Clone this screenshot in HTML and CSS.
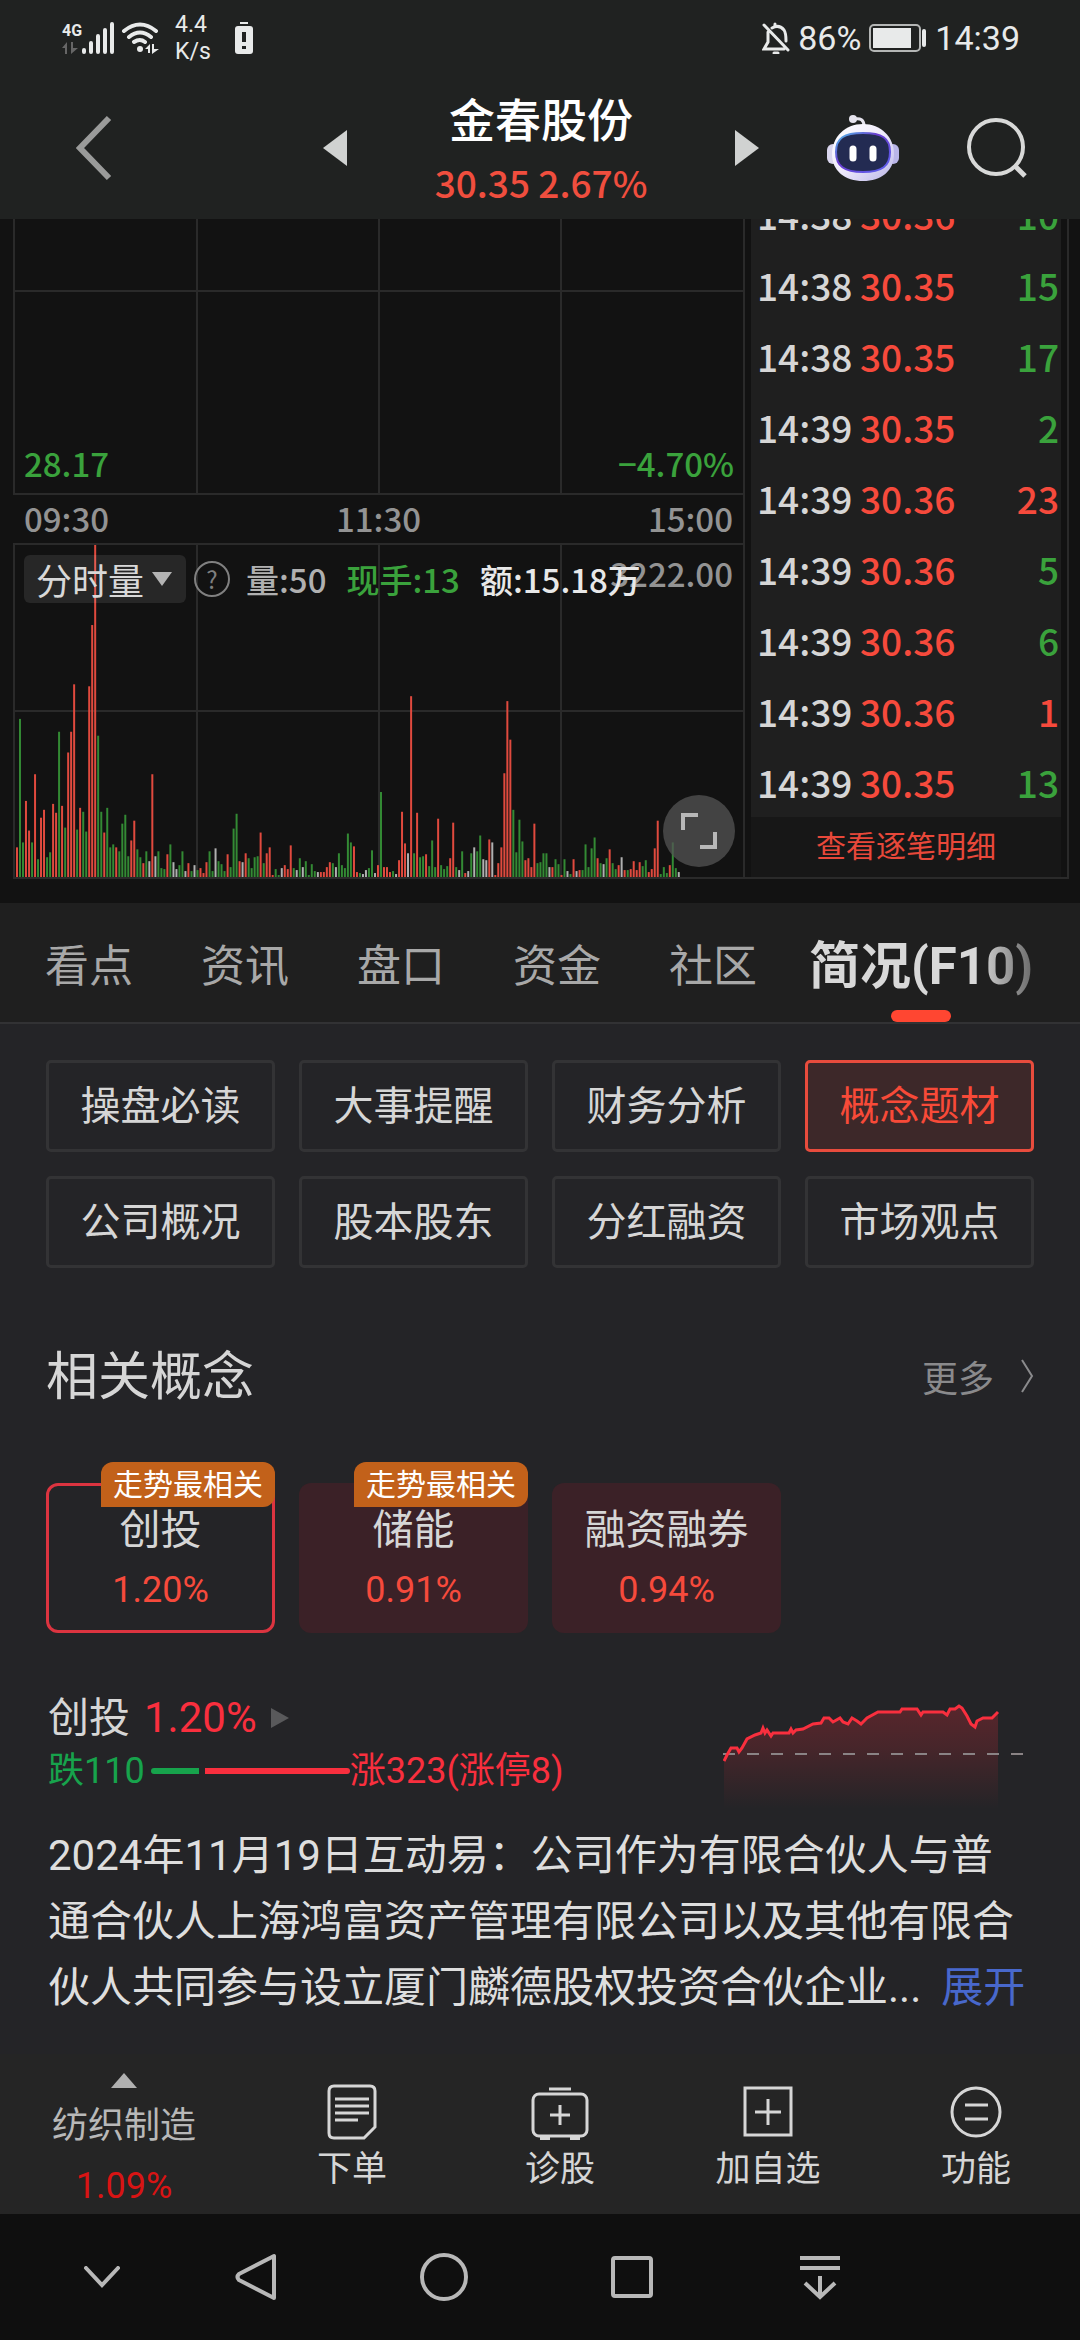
FILE: index.html
```html
<!DOCTYPE html>
<html lang="zh-CN">
<head>
  <meta charset="UTF-8">
  <meta name="viewport" content="width=device-width, initial-scale=1">
  <title>金春股份</title>
  <link rel="stylesheet" href="styles.css">
</head>
<body>
  <div class="status">
    <div class="net">
      <span class="net-type">4G</span>
      <svg width="16" height="12" viewBox="0 0 16 12" fill="#666"><path d="M0 6L5 0V12H3V6zM9 0H11V6H16L9 12z"/></svg>
    </div>
    <svg class="signal" width="33" height="32" viewBox="0 0 33 32" stroke="#e8eaea" stroke-width="4" stroke-linecap="round"><path d="M2 28V30M9 21V30M16 14V30M23 8V30M30 2V30"/></svg>
    <svg class="wifi" width="40" height="32" viewBox="0 0 40 32" fill="none" stroke="#e8eaea" stroke-width="4" stroke-linecap="round"><path d="M3 9Q19 -4 35 9M8 15Q19 6 30 15M13 20Q19 16 24 20"/><circle cx="19" cy="27" r="3" fill="#e8eaea" stroke="none"/><path d="M24 27L29 22V31H27V27zM31 22H33V27H38L31 32z" fill="#e8eaea" stroke="none"/></svg>
    <div class="speed">4.4<br>K/s</div>
    <svg class="warn" width="18" height="32" viewBox="0 0 18 32"><path d="M5 0H13V2H5z" fill="#e8eaea"/><rect y="4" width="18" height="28" rx="3" fill="#e8eaea"/><path d="M9 10V20M9 24V27" stroke="#202221" stroke-width="4"/></svg>
    <div class="status-right">
      <svg width="28" height="32" viewBox="0 0 28 32" fill="none" stroke="#e8eaea" stroke-width="3" stroke-linecap="round"><path d="M2 3L26 28M10 6Q17 2 22 8Q24 11 24 19M6 10V20L2 27H22"/><path d="M13 4V2M12 31H16"/></svg>
      <span>86%</span>
      <svg class="battery" width="58" height="28" viewBox="0 0 58 28"><rect x="1" y="1" width="50" height="26" rx="4" fill="none" stroke="#b4b6b5" stroke-width="2"/><rect x="4" y="4" width="38" height="20" fill="#e8eaea"/><path d="M55 7V21" stroke="#e8eaea" stroke-width="4" stroke-linecap="round"/></svg>
      <span>14:39</span>
    </div>
  </div>

  <header class="header">
    <button class="icon-btn" aria-label="返回"><svg width="36" height="66" viewBox="0 0 36 66" fill="none" stroke="#9a9b9a" stroke-width="6"><path d="M33 3L4 33L33 63"/></svg></button>
    <div class="switcher">
      <button class="icon-btn" aria-label="上一只"><svg width="24" height="36" viewBox="0 0 24 36"><path d="M0 18L24 0V36z" fill="#d0d2d1"/></svg></button>
      <div class="stock">
        <h1>金春股份</h1>
        <p class="num">30.35 2.67%</p>
      </div>
      <button class="icon-btn" aria-label="下一只"><svg width="24" height="36" viewBox="0 0 24 36"><path d="M24 18L0 0V36z" fill="#d0d2d1"/></svg></button>
    </div>
    <button class="icon-btn robot" aria-label="智能助手">
      <svg width="72" height="68" viewBox="0 0 72 68">
        <defs>
          <linearGradient id="shell" x1="0" y1="0" x2="1" y2="1"><stop offset="0" stop-color="#fff"/><stop offset=".5" stop-color="#eeeafb"/><stop offset="1" stop-color="#b9b5e8"/></linearGradient>
          <linearGradient id="rim" x1="0" y1="0" x2="1" y2="1"><stop offset="0" stop-color="#4fc0e8"/><stop offset=".4" stop-color="#6a3bd0"/><stop offset="1" stop-color="#5b62ee"/></linearGradient>
        </defs>
        <path d="M27 5Q37 3 37 12" fill="none" stroke="#e6e4ee" stroke-width="3"/>
        <circle cx="26" cy="5" r="4" fill="#e6e4ee"/>
        <rect x="0" y="30" width="12" height="20" rx="6" fill="#d9d6ee"/>
        <rect x="60" y="30" width="12" height="20" rx="6" fill="#b9b5e8"/>
        <path d="M36 10C54 10 67 23 67 40C67 57 54 67 36 67C18 67 5 57 5 40C5 23 18 10 36 10z" fill="url(#shell)"/>
        <path d="M36 19C55 19 63 24 63 38C63 52 55 58 36 58C17 58 9 52 9 38C9 24 17 19 36 19z" fill="#232b52" stroke="url(#rim)" stroke-width="2"/>
        <path d="M26 35V44M46 35V44" stroke="#fff" stroke-width="7" stroke-linecap="round"/>
      </svg>
    </button>
    <button class="icon-btn" aria-label="搜索"><svg width="60" height="60" viewBox="0 0 60 60" fill="none" stroke="#d8d9d8" stroke-width="4"><circle cx="29" cy="29" r="27"/><path d="M48 48L58 58" stroke-width="5"/></svg></button>
  </header>

  <section class="quote">
    <div class="chart num">
      <div class="pane price-pane">
        <svg class="grid" width="100%" height="100%" stroke="#2a2a2a" stroke-width="2">
          <line x1="25%" x2="25%" y1="0" y2="100%"/><line x1="50%" x2="50%" y1="0" y2="100%"/><line x1="75%" x2="75%" y1="0" y2="100%"/><line x1="0" x2="100%" y1="72" y2="72"/>
        </svg>
        <span class="down">28.17</span>
        <span class="down">−4.70%</span>
      </div>
      <div class="axis"><span>09:30</span><span>11:30</span><span>15:00</span></div>
      <div class="pane volume-pane">
        <svg class="grid" width="100%" height="100%" stroke="#2a2a2a" stroke-width="2">
          <line x1="25%" x2="25%" y1="0" y2="100%"/><line x1="50%" x2="50%" y1="0" y2="100%"/><line x1="75%" x2="75%" y1="0" y2="100%"/><line x1="0" x2="100%" y1="50%" y2="50%"/>
        </svg>
        <svg class="grid" id="volume" width="100%" height="100%" viewBox="0 0 730 336" preserveAspectRatio="none"></svg>
        <span class="max">3222.00</span>
        <div class="indicators">
          <label class="picker">
            <select aria-label="指标"><option>分时量</option></select>
            <svg width="20" height="14" viewBox="0 0 20 14"><path d="M0 0H20L10 14z" fill="#b4b4b4"/></svg>
          </label>
          <button class="icon-btn help" aria-label="说明">?</button>
          <span class="vol">量:50</span>
          <span class="down">现手:13</span>
          <span class="amount">额:15.18万</span>
        </div>
        <button class="expand" aria-label="全屏"><svg width="38" height="38" viewBox="0 0 38 38" fill="none" stroke="#b8b8b8" stroke-width="4"><path d="M3 18V3H18M35 20V35H20"/></svg></button>
      </div>
    </div>
    <div class="ticks">
      <div class="tick-list">
        <table class="num">
          <tbody>
            <tr><td>14:38</td><td>30.36</td><td class="down">10</td></tr>
            <tr><td>14:38</td><td>30.35</td><td class="down">15</td></tr>
            <tr><td>14:38</td><td>30.35</td><td class="down">17</td></tr>
            <tr><td>14:39</td><td>30.35</td><td class="down">2</td></tr>
            <tr><td>14:39</td><td>30.36</td><td class="up">23</td></tr>
            <tr><td>14:39</td><td>30.36</td><td class="down">5</td></tr>
            <tr><td>14:39</td><td>30.36</td><td class="down">6</td></tr>
            <tr><td>14:39</td><td>30.36</td><td class="up">1</td></tr>
            <tr><td>14:39</td><td>30.35</td><td class="down">13</td></tr>
          </tbody>
        </table>
      </div>
      <a class="tick-more" href="#">查看逐笔明细</a>
    </div>
  </section>

  <nav class="tabs">
    <a href="#">看点</a>
    <a href="#">资讯</a>
    <a href="#">盘口</a>
    <a href="#">资金</a>
    <a href="#">社区</a>
    <a href="#" class="active"><span>简况(F10)</span></a>
  </nav>

  <main class="content">
    <div class="menu">
      <button>操盘必读</button>
      <button>大事提醒</button>
      <button>财务分析</button>
      <button class="selected">概念题材</button>
      <button>公司概况</button>
      <button>股本股东</button>
      <button>分红融资</button>
      <button>市场观点</button>
    </div>

    <div class="section-head">
      <h2>相关概念</h2>
      <a href="#">更多 <svg width="14" height="34" viewBox="0 0 14 34" fill="none" stroke="#8a8a8c" stroke-width="2"><path d="M2 1L12 17L2 33"/></svg></a>
    </div>

    <div class="concepts">
      <button class="concept current"><span class="badge">走势最相关</span><span>创投</span><span class="pct">1.20%</span></button>
      <button class="concept"><span class="badge">走势最相关</span><span>储能</span><span class="pct">0.91%</span></button>
      <button class="concept"><span>融资融券</span><span class="pct">0.94%</span></button>
    </div>

    <div class="detail">
      <div>
        <a class="detail-name" href="#">创投 <b>1.20%</b> <svg width="18" height="20" viewBox="0 0 18 20"><path d="M0 0L18 10L0 20z" fill="#59595b"/></svg></a>
        <div class="ratio">
          <span class="fall">跌110</span>
          <i class="fall-bar"></i><i class="rise-bar"></i>
          <span class="rise">涨323(涨停8)</span>
        </div>
      </div>
      <svg class="trend" width="300" height="106" viewBox="0 0 300 106">
        <defs><linearGradient id="fade" x1="0" y1="0" x2="0" y2="1"><stop offset="0" stop-color="#ff2d3c" stop-opacity=".24"/><stop offset=".4" stop-color="#ff2d3c" stop-opacity=".16"/><stop offset="1" stop-color="#ff2d3c" stop-opacity="0"/></linearGradient></defs>
        <path d="M1 58L4 52L8 45L14 45L16 49L19 45L24 36L32 32L38 30L40 25L42 30L44 27L48 33L50 30L66 30L68 26L70 30L73 27L80 26L90 21L98 20L101 15L106 15L110 19L117 15L120 19L125 21L129 15L134 18L138 21L144 15L155 9L177 9L179 6L194 6L198 12L200 9L220 9L224 12L227 6L232 6L236 3L239 5L244 13L248 21L252 24L254 18L260 15L269 15L275 9V106H1z" fill="url(#fade)"/>
        <path d="M0 51H300" stroke="#8a8385" stroke-width="2" stroke-dasharray="12 12"/>
        <path d="M1 58L4 52L8 45L14 45L16 49L19 45L24 36L32 32L38 30L40 25L42 30L44 27L48 33L50 30L66 30L68 26L70 30L73 27L80 26L90 21L98 20L101 15L106 15L110 19L117 15L120 19L125 21L129 15L134 18L138 21L144 15L155 9L177 9L179 6L194 6L198 12L200 9L220 9L224 12L227 6L232 6L236 3L239 5L244 13L248 21L252 24L254 18L260 15L269 15L275 9" fill="none" stroke="#f92f3e" stroke-width="3"/>
      </svg>
    </div>

    <p class="reason">2024年11月19日互动易：公司作为有限合伙人与普通合伙人上海鸿富资产管理有限公司以及其他有限合伙人共同参与设立厦门麟德股权投资合伙企业...<a href="#">展开</a></p>
  </main>

  <footer class="toolbar">
    <button class="sector">
      <svg width="26" height="15" viewBox="0 0 26 15"><path d="M13 0L26 15H0z" fill="#b0b0b0"/></svg>
      <span>纺织制造</span>
      <span class="sector-pct">1.09%</span>
    </button>
    <button>
      <svg width="58" height="56" viewBox="0 0 58 56" fill="none" stroke="#d6d6d6" stroke-width="3"><path d="M11 2H47Q52 2 52 7V43L41 54H11Q6 54 6 49V7Q6 2 11 2z"/><path d="M12 15H46M12 22H46M12 29H46M12 36H35"/></svg>
      <span>下单</span>
    </button>
    <button>
      <svg width="58" height="56" viewBox="0 0 58 56" fill="none" stroke="#d6d6d6" stroke-width="3"><rect x="2" y="10" width="54" height="42" rx="6"/><path d="M18 5H40M29 21V41M19 31H39"/><path d="M9 54H19M39 54H49" stroke-width="4"/></svg>
      <span>诊股</span>
    </button>
    <button>
      <svg width="58" height="56" viewBox="0 0 58 56" fill="none" stroke="#d6d6d6" stroke-width="3"><rect x="6" y="4" width="46" height="47"/><path d="M29 15V41M16 28H42"/></svg>
      <span>加自选</span>
    </button>
    <button>
      <svg width="58" height="56" viewBox="0 0 58 56" fill="none" stroke="#d6d6d6" stroke-width="3"><circle cx="29" cy="28" r="24"/><path d="M18 21H41M18 35H41"/></svg>
      <span>功能</span>
    </button>
  </footer>

  <div class="sysnav">
    <button aria-label="收起"><svg width="38" height="22" viewBox="0 0 38 22" fill="none" stroke="#b8b8b8" stroke-width="4" stroke-linecap="round"><path d="M3 2L19 19L35 2"/></svg></button>
    <button aria-label="返回"><svg width="42" height="48" viewBox="0 0 42 48" fill="none" stroke="#b8b8b8" stroke-width="4" stroke-linejoin="round"><path d="M39 3V45L4 27Q1 24 4 21z"/></svg></button>
    <button aria-label="主页"><svg width="48" height="48" viewBox="0 0 48 48" fill="none" stroke="#b8b8b8" stroke-width="4"><circle cx="24" cy="24" r="22"/></svg></button>
    <button aria-label="最近任务"><svg width="44" height="44" viewBox="0 0 44 44" fill="none" stroke="#b8b8b8" stroke-width="4"><rect x="3" y="3" width="38" height="38" rx="2"/></svg></button>
    <button aria-label="通知"><svg width="42" height="46" viewBox="0 0 42 46" fill="none" stroke="#b8b8b8" stroke-width="4"><path d="M1 4H41M1 14H41M21 22V42"/><path d="M6 29L21 43L36 29"/></svg></button>
  </div>

  <script src="chart.js"></script>
</body>
</html>
```

FILE: styles.css
```css
* {
  box-sizing: border-box;
  margin: 0;
  padding: 0;
}
body {
  display: flex;
  flex-direction: column;
  min-height: 100vh;
  font-family: Roboto, "Noto Sans CJK SC", sans-serif;
  background: #242427;
  color: #d6d6d6;
}
button {
  background: none;
  border: none;
  color: inherit;
  font-family: inherit;
  cursor: pointer;
}
a {
  color: inherit;
  text-decoration: none;
}
svg {
  display: block;
  flex: none;
}
.num {
  font-family: "Noto Sans CJK SC", sans-serif;
}
.up {
  color: #f64a3c;
}
.down {
  color: #3aa23c;
}

/* status bar */
.status {
  display: flex;
  align-items: center;
  height: 76px;
  padding: 0 60px 0 62px;
  background: #202221;
  color: #e8eaea;
}
.net {
  display: flex;
  flex-direction: column;
  gap: 2px;
}
.net-type {
  font-size: 16px;
  line-height: 18px;
  font-weight: 700;
}
.wifi {
  margin-left: 6px;
}
.speed {
  margin-left: 14px;
  font-size: 23px;
  line-height: 27px;
}
.warn {
  margin-left: 24px;
}
.status-right {
  display: flex;
  align-items: center;
  gap: 8px;
  margin-left: auto;
  font-size: 34px;
}

/* stock header */
.header {
  display: flex;
  align-items: center;
  gap: 68px;
  height: 143px;
  padding: 0 53px 0 76px;
  background: #202221;
}
.icon-btn {
  flex: none;
}
.switcher {
  display: flex;
  align-items: center;
  justify-content: space-between;
  width: 436px;
  margin-left: auto;
}
.stock {
  padding-top: 6px;
  text-align: center;
}
.stock h1 {
  font-size: 46px;
  line-height: 62px;
  font-weight: 500;
  color: #fff;
}
.stock p {
  font-size: 37px;
  line-height: 60px;
  font-weight: 500;
  color: #f04e3e;
}

/* chart and ticks */
.quote {
  display: flex;
  padding: 0 11px 24px 13px;
  background: #121212;
}
.chart {
  flex: 1;
  font-size: 33px;
  font-weight: 500;
  color: #939393;
}
.pane {
  position: relative;
  border: 2px solid #2a2a2a;
}
.grid {
  position: absolute;
  left: 0;
  top: 0;
}
.price-pane {
  display: flex;
  justify-content: space-between;
  align-items: flex-end;
  height: 276px;
  padding: 0 9px 6px;
  border-top: none;
}
.axis {
  display: flex;
  justify-content: space-between;
  align-items: center;
  height: 48px;
  padding: 0 10px 2px 11px;
  border-right: 2px solid #2a2a2a;
}
.volume-pane {
  height: 336px;
}
.max {
  position: absolute;
  right: 10px;
  top: 4px;
}
.indicators {
  position: relative;
  display: flex;
  align-items: center;
  height: 48px;
  margin: 10px 0 0 9px;
  white-space: nowrap;
}
.picker {
  display: flex;
  align-items: center;
  gap: 8px;
  height: 48px;
  padding: 0 14px 0 12px;
  border-radius: 6px;
  background: rgba(255, 255, 255, 0.09);
}
.picker select {
  width: 108px;
  appearance: none;
  background: none;
  border: none;
  color: #d8d8d8;
  font-family: inherit;
  font-size: 36px;
  line-height: 48px;
}
.help {
  width: 36px;
  height: 36px;
  margin-left: 8px;
  border: 2px solid #808080;
  border-radius: 50%;
  color: #808080;
  font-size: 24px;
  line-height: 30px;
}
.vol {
  margin-left: 16px;
  color: #b0b0b0;
}
.indicators .down {
  margin-left: 20px;
}
.amount {
  margin-left: 20px;
  color: #e8e8e8;
}
.expand {
  position: absolute;
  right: 8px;
  bottom: 10px;
  display: flex;
  align-items: center;
  justify-content: center;
  width: 72px;
  height: 72px;
  border-radius: 50%;
  background: rgba(84, 84, 84, 0.75);
}
.ticks {
  display: flex;
  flex-direction: column;
  width: 324px;
  padding: 0 6px;
  border-right: 2px solid #2a2a2a;
  border-bottom: 2px solid #2a2a2a;
}
.tick-list {
  display: flex;
  flex-direction: column;
  justify-content: flex-end;
  height: 598px;
  overflow: hidden;
  background: #1f1f1f;
}
.tick-list table {
  flex: none;
  width: 100%;
  border-collapse: collapse;
  font-size: 37px;
  font-weight: 500;
}
.tick-list td {
  height: 71px;
  padding-left: 6px;
  line-height: 50px;
}
.tick-list td:first-child {
  width: 103px;
}
.tick-list td:nth-child(2) {
  color: #f64a3c;
}
.tick-list td:last-child {
  padding-right: 2px;
  text-align: right;
}
.tick-more {
  flex: 1;
  font-size: 30px;
  line-height: 60px;
  text-align: center;
  color: #e8483a;
  background: #171717;
}

/* tabs */
.tabs {
  display: flex;
  align-items: center;
  gap: 68px;
  height: 121px;
  padding: 0 45px;
  border-bottom: 2px solid #323234;
  background: #1f1f1f;
  color: #a8a8a8;
  font-size: 44px;
  white-space: nowrap;
}
.tabs .active {
  position: relative;
  margin-left: -16px;
  padding-top: 8px;
  font-size: 51px;
  line-height: 111px;
  font-weight: 700;
}
.tabs .active span {
  background: linear-gradient(90deg, #d8d8d8 75%, #6a6a6a);
  background-clip: text;
  color: transparent;
}
.tabs .active::after {
  content: "";
  position: absolute;
  left: 50%;
  bottom: 0;
  width: 60px;
  height: 12px;
  margin-left: -30px;
  border-radius: 6px;
  background: #ff4631;
}

/* F10 content */
.content {
  padding: 36px 46px 0;
}
.menu {
  display: grid;
  grid-template-columns: repeat(4, 1fr);
  gap: 24px;
}
.menu button {
  height: 92px;
  padding-bottom: 6px;
  border: 3px solid #333335;
  border-radius: 5px;
  font-size: 40px;
}
.menu .selected {
  border-color: #e84c3d;
  background: #3d2829;
  color: #f84a38;
}
.section-head {
  display: flex;
  justify-content: space-between;
  align-items: center;
  margin-top: 76px;
}
.section-head h2 {
  padding-top: 4px;
  font-size: 52px;
  line-height: 60px;
  font-weight: 400;
}
.section-head a {
  display: flex;
  align-items: center;
  gap: 26px;
  font-size: 36px;
  color: #8a8a8c;
}
.concepts {
  display: grid;
  grid-template-columns: repeat(4, 1fr);
  gap: 24px;
  margin-top: 75px;
}
.concept {
  position: relative;
  display: flex;
  flex-direction: column;
  align-items: center;
  height: 150px;
  padding-top: 14px;
  border: 3px solid transparent;
  border-radius: 12px;
  background: #3b2127 border-box;
  font-size: 41px;
  line-height: 60px;
}
.concept.current {
  border-color: #dc3440;
  background: none;
}
.pct {
  font-size: 36px;
  color: #f64a3c;
}
.badge {
  position: absolute;
  right: -3px;
  top: -24px;
  padding: 0 12px;
  border-radius: 12px 12px 12px 0;
  background: #c2611a;
  color: #fff;
  font-size: 30px;
  line-height: 45px;
}
.detail {
  display: flex;
  justify-content: space-between;
  margin-top: 58px;
  padding: 0 11px 0 2px;
}
.detail-name {
  display: flex;
  align-items: center;
  gap: 14px;
  font-size: 41px;
  line-height: 54px;
}
.detail-name b {
  font-size: 42px;
  font-weight: 400;
  color: #f92f3e;
}
.ratio {
  display: flex;
  align-items: center;
  font-size: 36px;
  line-height: 52px;
}
.fall {
  color: #17a34c;
}
.rise {
  color: #f92f3e;
}
.fall-bar {
  width: 48px;
  height: 6px;
  margin: 0 6px;
  border-radius: 3px 0 0 3px;
  background: #17a34c;
}
.rise-bar {
  width: 145px;
  height: 6px;
  border-radius: 0 3px 3px 0;
  background: #f92f3e;
}
.trend {
  margin-top: 12px;
}
.reason {
  margin-top: 14px;
  padding-left: 2px;
  font-size: 42px;
  line-height: 66px;
  color: #dedede;
}
.reason a {
  margin-left: 20px;
  color: #4868cc;
}

/* bottom toolbar */
.toolbar {
  display: grid;
  grid-template-columns: 31fr 26fr 26fr 26fr 26fr;
  height: 160px;
  margin-top: auto;
  background: #252525;
}
.toolbar button {
  display: flex;
  flex-direction: column;
  align-items: center;
  padding-top: 30px;
  font-size: 35px;
  line-height: 60px;
}
.toolbar .sector {
  padding-top: 19px;
  font-size: 36px;
  color: #b8b8b8;
}
.sector svg {
  margin-bottom: 8px;
}
.toolbar .sector-pct {
  color: #d81414;
}

/* system navigation */
.sysnav {
  display: grid;
  grid-template-columns: 120fr 188fr 188fr 188fr 188fr;
  height: 126px;
  padding: 0 166px 0 42px;
  background: #0f0f0f;
}
.sysnav button {
  display: flex;
  align-items: center;
  justify-content: center;
}
```

FILE: chart.js
```js
// one entry per minute: colour (r up, g down, w flat) + bar height
const volumes = `r30 g160 g35 r77 r47 g35 r104 g18 r60 r68 g20 g25 r74 r65 g147 r72 g50 r126 r147 r195
g48 r70 g66 g46 r193 r255 r336 g143 g66 r45 g70 g30 g33 r30 g26 g54 g63 g21 r37 r57
g28 g20 r14 g26 w16 r104 w21 g26 g9 g8 r23 g33 w15 w8 g12 g26 w6 r14 g6 w12
g7 r9 r4 r15 g26 g6 w29 g16 g13 g6 r23 g10 g49 g64 r16 w15 r24 g19 g9 g20
g21 r45 g14 r24 r30 r2 g8 g2 w9 r12 r8 r32 g9 w7 g19 w10 g16 g2 g13 g6
w5 r5 r5 r10 r15 g14 w10 g24 g12 g9 g44 g35 r31 r5 g4 w3 w7 g9 g27 w4
r12 g86 r10 r10 r5 g6 w3 r17 r66 r34 w24 r183 g24 r65 g20 g21 r23 g11 g37 g10
r59 g12 g8 g11 r19 r55 g10 w7 g26 r4 w6 g24 w30 g26 g42 w18 w17 r38 w35 r2
r14 r30 r105 r178 r139 g68 g25 g58 g36 r17 r19 r10 r54 g14 g15 g24 g24 w10 r10 g18
g13 r2 g18 w6 g3 r18 w6 r7 g7 g33 g10 g29 g40 r19 g14 w13 g19 r28 g14 g8
r12 w20 r7 g7 r8 r16 r7 r15 g11 g17 r5 r8 r29 r57 g3 g10 g4 r12 g35 g9 w5`.split(/\s+/);

const colors = { r: "#e04a3e", g: "#338a34", w: "#b0b0b0" };
const step = 730 / 242;

document.getElementById("volume").innerHTML = volumes.map((item, i) => {
  const h = Number(item.slice(1));
  return `<rect x="${(1 + i * step).toFixed(1)}" y="${336 - h}" width="2" height="${h}" fill="${colors[item[0]]}"/>`;
}).join("");
```
